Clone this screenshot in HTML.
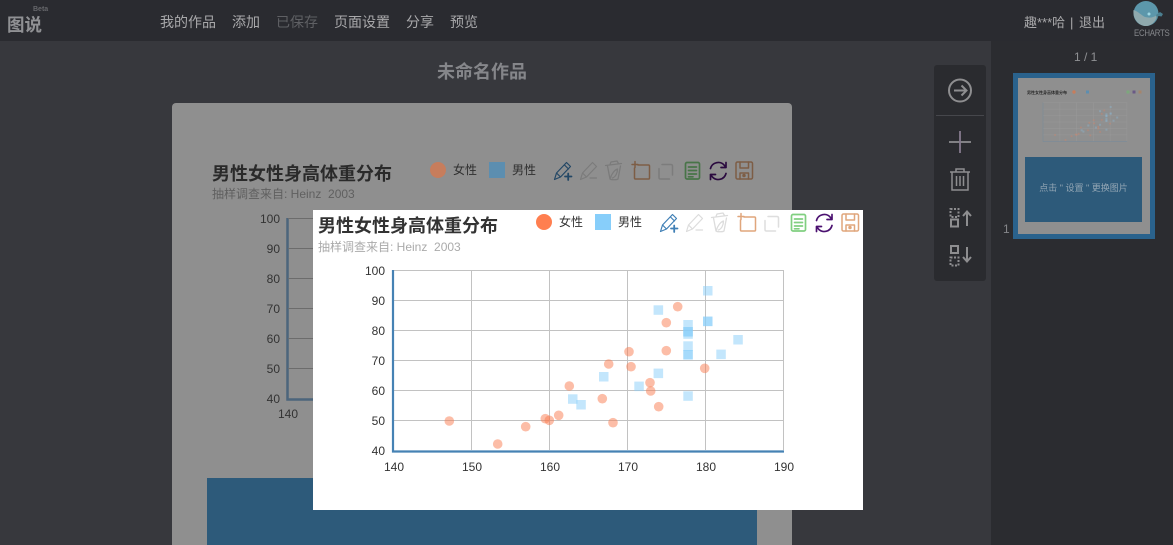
<!DOCTYPE html>
<html><head><meta charset="utf-8">
<style>
html,body{margin:0;padding:0;width:1173px;height:545px;overflow:hidden;background:#37383d;font-family:"Liberation Sans","Noto Sans CJK SC",sans-serif}
div,span,svg{position:absolute}
svg{overflow:visible}
.t{white-space:nowrap;line-height:1}
</style></head>
<body>
<svg width="0" height="0" style="left:0;top:0">
<defs>
<g id="tools" fill="none" stroke-linejoin="round" stroke-linecap="round">
<g stroke="#3f7fb5" stroke-width="1.200"><path d="M660.500 231.500l2-6.500 10-10.500 4 4-10 10.500z M662.500 225l4 4 M670.500 217l4 4"/><path d="M671 228.500h6.500M674.200 225.500v6.500" stroke-width="1.800"/></g>
<g stroke="#dcdcdc" stroke-width="1.200"><path d="M686.500 231.500l2-6.500 10-10.500 4 4-10 10.500z M688.500 225l4 4"/><path d="M696 230h6.500"/></g>
<g stroke="#dcdcdc" stroke-width="1.300"><path d="M711.500 217.500l16-2M716 216.500l1-2.500 6-1 1.500 2.500M713.500 218l2.500 13c1 1 7 1 8 0l2.500-13M716.500 230c1-4 4-8 7-9 0 4-2 8-5 9"/></g>
<g stroke="#e0a67c" stroke-width="1.500"><path d="M744 217h10.500q1 0 1 1v12q0 1-1 1h-13q-1 0-1-1v-10M738 216.500h6M741 213.500v6"/></g>
<g stroke="#dedede" stroke-width="1.500"><path d="M768 216.500h9q1.500 0 1.500 1.500v9M775.500 231h-9q-1.500 0-1.500-1.500v-9"/></g>
<g stroke="#80cf80" stroke-width="1.700"><rect x="791.500" y="214.500" width="14" height="16.500" rx="1.500"/><path d="M794.500 219h8M794.500 222.500h8M794.500 226h8M794.500 228.800h4.500"/></g>
<g stroke="#4b1170" stroke-width="1.700"><path d="M816.500 220.500a8 8 0 0 1 14-3l1.500 2M832 214.500v5h-5M832 225.500a8 8 0 0 1-14 3l-1.500-2M816.500 231.500v-5h5"/></g>
<g stroke="#e0a67c" stroke-width="1.500"><rect x="842" y="214" width="16.500" height="17" rx="1.500"/><path d="M846 214v6h8.500v-6M846 231v-6h8.500v6"/><circle cx="850" cy="227.500" r="1" fill="#e0a67c"/></g>
</g>
<g id="dots">
<g fill="#fa7c4f" fill-opacity=".5"><circle cx="449.300" cy="421" r="4.800"/><circle cx="497.700" cy="444" r="4.800"/><circle cx="525.700" cy="426.700" r="4.800"/><circle cx="545.300" cy="418.700" r="4.800"/><circle cx="549.300" cy="420.300" r="4.800"/><circle cx="558.700" cy="415.300" r="4.800"/><circle cx="569.300" cy="386" r="4.800"/><circle cx="677.700" cy="306.700" r="4.800"/><circle cx="666.300" cy="322.700" r="4.800"/><circle cx="629" cy="351.700" r="4.800"/><circle cx="666.300" cy="350.700" r="4.800"/><circle cx="608.700" cy="364" r="4.800"/><circle cx="631" cy="366.700" r="4.800"/><circle cx="704.700" cy="368.300" r="4.800"/><circle cx="650" cy="382.700" r="4.800"/><circle cx="650.700" cy="391" r="4.800"/><circle cx="602.300" cy="398.700" r="4.800"/><circle cx="658.700" cy="406.700" r="4.800"/><circle cx="613" cy="422.700" r="4.800"/></g>
<g fill="#87cefa" fill-opacity=".5"><rect x="568" y="394.300" width="9.500" height="9.500"/><rect x="576.300" y="400" width="9.500" height="9.500"/><rect x="703" y="286" width="9.500" height="9.500"/><rect x="653.600" y="305.300" width="9.500" height="9.500"/><rect x="683.300" y="320" width="9.500" height="9.500"/><rect x="703" y="316.600" width="9.500" height="9.500"/><rect x="703" y="316.600" width="9.500" height="9.500"/><rect x="683.300" y="327" width="9.500" height="9.500"/><rect x="683.300" y="327" width="9.500" height="9.500"/><rect x="683.300" y="329.300" width="9.500" height="9.500"/><rect x="733.300" y="335" width="9.500" height="9.500"/><rect x="683.300" y="341.300" width="9.500" height="9.500"/><rect x="683.300" y="350" width="9.500" height="9.500"/><rect x="683.300" y="350" width="9.500" height="9.500"/><rect x="716.300" y="349.600" width="9.500" height="9.500"/><rect x="653.600" y="368.600" width="9.500" height="9.500"/><rect x="599" y="372" width="9.500" height="9.500"/><rect x="634.300" y="381.600" width="9.500" height="9.500"/><rect x="683.300" y="391.300" width="9.500" height="9.500"/></g>
</g>
<g id="grid" stroke="#c2c2c2" stroke-width="1" fill="none">
<path d="M393 270.500H783.500V450M393 300.500H783M393 330.500H783M393 360.500H783M393 390.500H783M393 420.500H783M471.500 270V450M549.500 270V450M627.500 270V450M705.500 270V450"/>
<path d="M393 270V451.500H784" stroke="#4682b4" stroke-width="2.200"/>
</g>
</defs>
</svg>

<!-- top bar -->
<div style="left:0;top:0;width:1173px;height:41px;background:#2a2b30"></div>
<!-- right panel -->
<div style="left:991px;top:41px;width:182px;height:504px;background:#2b2c30"></div>

<div class="t" style="left:437px;top:63px;width:90px;font-size:18px;font-weight:700;color:#85868a">未命名作品</div>

<!-- card -->
<div style="left:172px;top:103px;width:620px;height:442px;background:#8f8f8f;border-radius:4px 4px 0 0"></div>
<div class="t" style="left:212px;top:165px;font-size:18px;font-weight:700;color:#2a2a2a">男性女性身高体重分布</div>
<div class="t" style="left:212px;top:188px;font-size:12px;color:#606060">抽样调查来自: Heinz&nbsp; 2003</div>
<div style="left:430px;top:162px;width:16px;height:16px;border-radius:50%;background:#c77d5c"></div>
<div class="t" style="left:453px;top:164px;font-size:12px;color:#2f2f2f">女性</div>
<div style="left:489px;top:162px;width:16px;height:16px;background:#5c8eb0"></div>
<div class="t" style="left:512px;top:164px;font-size:12px;color:#2f2f2f">男性</div>
<svg width="1173" height="545" style="left:0;top:0;filter:brightness(.56)"><use href="#tools" x="-106" y="-52"/></svg>
<svg width="1173" height="545" style="left:0;top:0">
<path d="M287.500 218V399.500H320" fill="none" stroke="#4c657c" stroke-width="2.500"/>
<path d="M288 218.500H313M288 248.500H313M288 278.500H313M288 308.500H313M288 338.500H313M288 368.500H313" stroke="#6c6c6c" fill="none"/>
</svg>
<div class="t" style="left:250px;top:213px;width:30px;text-align:right;font-size:12px;color:#333">100</div>
<div class="t" style="left:250px;top:243px;width:30px;text-align:right;font-size:12px;color:#333">90</div>
<div class="t" style="left:250px;top:273px;width:30px;text-align:right;font-size:12px;color:#333">80</div>
<div class="t" style="left:250px;top:303px;width:30px;text-align:right;font-size:12px;color:#333">70</div>
<div class="t" style="left:250px;top:333px;width:30px;text-align:right;font-size:12px;color:#333">60</div>
<div class="t" style="left:250px;top:363px;width:30px;text-align:right;font-size:12px;color:#333">50</div>
<div class="t" style="left:250px;top:393px;width:30px;text-align:right;font-size:12px;color:#333">40</div>
<div class="t" style="left:278px;top:408px;font-size:12px;color:#333">140</div>
<div style="left:207px;top:478px;width:550px;height:67px;background:#2d5a7a"></div>

<!-- nav text -->
<div class="t" style="left:33px;top:6px;font-size:7px;font-weight:700;color:#66676b">Beta</div>
<div class="t" style="left:7px;top:16.500px;font-size:17.500px;font-weight:700;color:#909194">图说</div>
<div class="t" style="left:160px;top:15px;font-size:14px;color:#a9a9ab">我的作品</div>
<div class="t" style="left:232px;top:15px;font-size:14px;color:#a9a9ab">添加</div>
<div class="t" style="left:276px;top:15px;font-size:14px;color:#5f6064">已保存</div>
<div class="t" style="left:334px;top:15px;font-size:14px;color:#a9a9ab">页面设置</div>
<div class="t" style="left:406px;top:15px;font-size:14px;color:#a9a9ab">分享</div>
<div class="t" style="left:450px;top:15px;font-size:14px;color:#a9a9ab">预览</div>
<div class="t" style="left:1024px;top:16px;font-size:13px;color:#a9a9ab">趣***哈</div>
<div class="t" style="left:1070px;top:16px;font-size:13px;color:#a9a9ab">|</div>
<div class="t" style="left:1079px;top:16px;font-size:13px;color:#a9a9ab">退出</div>
<svg width="53" height="42" style="left:1120px;top:0">
<circle cx="26" cy="13.500" r="12.500" fill="#5c97ab"/>
<path d="M13.500 10c4 1 7.500 5 11.500 7 4 1 8 1 12-2-1 7-6 11-11 11-7 0-13.500-7-12.500-16z" fill="#8fa9ad"/>
<circle cx="29" cy="14" r="1.500" fill="#9fd8e4"/>
<path d="M36 15l4-3 3 2-1.500 2.500-3-.5-1.500 2z" fill="#4b7f90"/>
</svg>
<div class="t" style="left:1134px;top:28.500px;font-size:9px;color:#85878b;letter-spacing:-.3px;transform:scaleX(.87);transform-origin:0 0">ECHARTS</div>

<!-- toolbar -->
<div style="left:934px;top:65px;width:52px;height:216px;background:#2a2b2f;border-radius:3px"></div>
<svg width="1173" height="545" style="left:0;top:0">
<g fill="none" stroke="#8e8e90" stroke-width="2">
<circle cx="960" cy="90.500" r="11"/>
<path d="M954 90.500H966M961.500 85.500l5 5-5 5"/>
<path d="M936 115.500H984" stroke="#46474c" stroke-width="1"/>
<path d="M949 142H971" stroke-width="1.800"/>
<path d="M960 131V153" stroke="#857a8e" stroke-width="1.800"/>
<path d="M950 172H970M956 172v-3h8v3M952 172v18H968V172M956.500 176v10M960 176v10M963.500 176v10" stroke-width="1.500"/>
<path d="M950.500 209h8v8h-8z" stroke-dasharray="2 1.500" stroke-width="2"/>
<path d="M951 219.500h7v7h-7z" stroke-width="2"/>
<path d="M967 226V212M963 216l4-4.500 4 4.500" stroke-width="2"/>
<path d="M951 246h7v7h-7z" stroke-width="2"/>
<path d="M950.500 257.500h8v8h-8z" stroke-dasharray="2 1.500" stroke-width="2"/>
<path d="M967 247V261M963 257l4 4.500 4-4.500" stroke-width="2"/>
</g>
</svg>

<!-- thumbnail -->
<div class="t" style="left:1074px;top:51px;font-size:12px;color:#909194">1 / 1</div>
<div class="t" style="left:1003px;top:223px;font-size:12px;color:#85868a">1</div>
<div style="left:1013px;top:73px;width:132px;height:156px;border:5px solid #2a628c;background:#8f8f8f"></div>
<div style="left:1025px;top:157px;width:117px;height:65px;background:#2d5a7a"></div>
<div class="t" style="left:1025px;top:184px;width:117px;text-align:center;font-size:9px;color:#93a6b4">点击 " 设置 " 更换图片</div>
<div class="t" style="left:1027px;top:91px;font-size:4px;font-weight:700;color:#2a2a2a">男性女性身高体重分布</div>
<svg width="120" height="70" style="left:1018px;top:78px">
<g transform="translate(-59.500 -33.500) scale(.215)">
<use href="#grid" opacity=".4"/>
<use href="#dots" opacity=".5"/>
</g>
<circle cx="56" cy="14" r="1.700" fill="#c77d5c"/>
<rect x="68" y="12.500" width="3" height="3" fill="#5c8eb0"/>
<rect x="108.500" y="12.500" width="3" height="3" fill="#7ca87c"/>
<rect x="114.500" y="12.500" width="3" height="3" fill="#6a5a86"/>
<rect x="120.500" y="12.500" width="3" height="3" fill="#a5856c"/>
</svg>

<!-- front chart -->
<div style="left:313px;top:210px;width:550px;height:300px;background:#fff"></div>
<div class="t" style="left:318px;top:216.500px;font-size:18px;font-weight:700;color:#333">男性女性身高体重分布</div>
<div class="t" style="left:318px;top:241px;font-size:12px;color:#aaa">抽样调查来自: Heinz&nbsp; 2003</div>
<div style="left:536px;top:214px;width:16px;height:16px;border-radius:50%;background:#ff7f50"></div>
<div class="t" style="left:559px;top:216px;font-size:12px;color:#333">女性</div>
<div style="left:595px;top:214px;width:16px;height:16px;background:#87cefa"></div>
<div class="t" style="left:618px;top:216px;font-size:12px;color:#333">男性</div>
<svg width="1173" height="545" style="left:0;top:0">
<use href="#tools"/>
<use href="#grid"/>
<use href="#dots"/>
</svg>
<div class="t" style="left:355px;top:265px;width:30px;text-align:right;font-size:12px;color:#333">100</div>
<div class="t" style="left:355px;top:295px;width:30px;text-align:right;font-size:12px;color:#333">90</div>
<div class="t" style="left:355px;top:325px;width:30px;text-align:right;font-size:12px;color:#333">80</div>
<div class="t" style="left:355px;top:355px;width:30px;text-align:right;font-size:12px;color:#333">70</div>
<div class="t" style="left:355px;top:385px;width:30px;text-align:right;font-size:12px;color:#333">60</div>
<div class="t" style="left:355px;top:415px;width:30px;text-align:right;font-size:12px;color:#333">50</div>
<div class="t" style="left:355px;top:445px;width:30px;text-align:right;font-size:12px;color:#333">40</div>
<div class="t" style="left:384px;top:461px;font-size:12px;color:#333">140</div>
<div class="t" style="left:462px;top:461px;font-size:12px;color:#333">150</div>
<div class="t" style="left:540px;top:461px;font-size:12px;color:#333">160</div>
<div class="t" style="left:618px;top:461px;font-size:12px;color:#333">170</div>
<div class="t" style="left:696px;top:461px;font-size:12px;color:#333">180</div>
<div class="t" style="left:774px;top:461px;font-size:12px;color:#333">190</div>
</body></html>
